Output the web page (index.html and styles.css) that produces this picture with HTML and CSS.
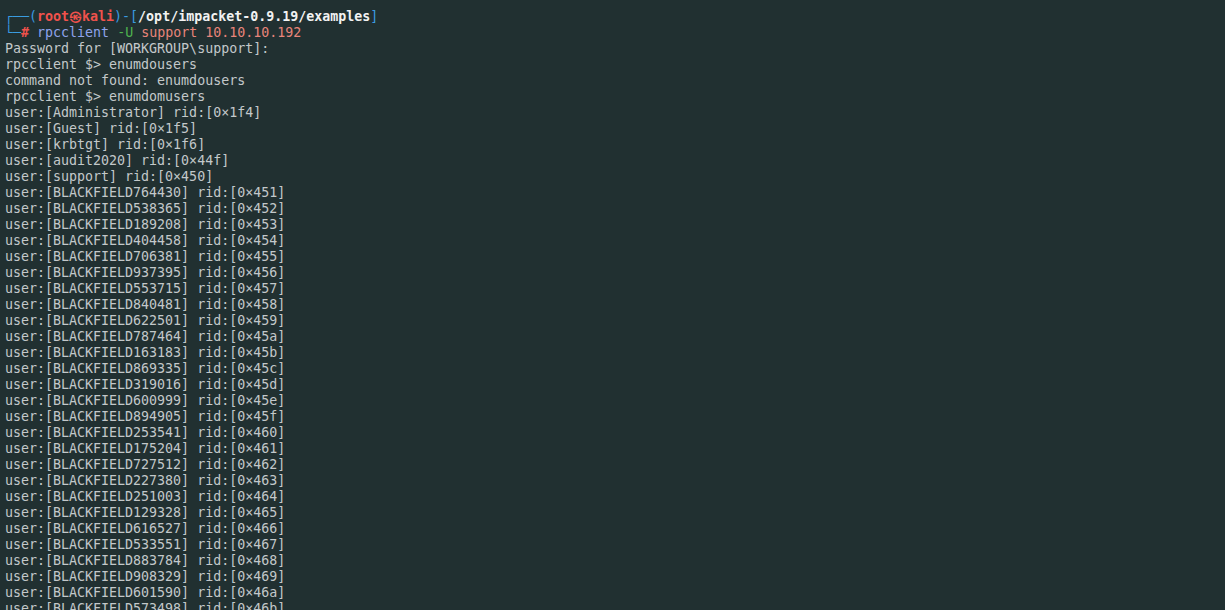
FILE: index.html
```html
<!DOCTYPE html>
<html>
<head>
<meta charset="utf-8">
<link rel="stylesheet" href="styles.css">
</head>
<body>
<div class="term">
<div class="ln"><span class="bx">┌──(</span><span class="usr">root㉿kali</span><span class="bx">)-[</span><span class="path">/opt/impacket-0.9.19/examples</span><span class="bx">]</span></div>
<div class="ln"><span class="bx">└─</span><span class="usr">#</span> <span class="cmd">rpcclient</span> <span class="opt">-U</span> <span class="arg">support 10.10.10.192</span></div>
<div class="ln">Password for [WORKGROUP\support]:</div>
<div class="ln">rpcclient $&gt; enumdousers</div>
<div class="ln">command not found: enumdousers</div>
<div class="ln">rpcclient $&gt; enumdomusers</div>
<div class="ln">user:[Administrator] rid:[0×1f4]</div>
<div class="ln">user:[Guest] rid:[0×1f5]</div>
<div class="ln">user:[krbtgt] rid:[0×1f6]</div>
<div class="ln">user:[audit2020] rid:[0×44f]</div>
<div class="ln">user:[support] rid:[0×450]</div>
<div class="ln">user:[BLACKFIELD764430] rid:[0×451]</div>
<div class="ln">user:[BLACKFIELD538365] rid:[0×452]</div>
<div class="ln">user:[BLACKFIELD189208] rid:[0×453]</div>
<div class="ln">user:[BLACKFIELD404458] rid:[0×454]</div>
<div class="ln">user:[BLACKFIELD706381] rid:[0×455]</div>
<div class="ln">user:[BLACKFIELD937395] rid:[0×456]</div>
<div class="ln">user:[BLACKFIELD553715] rid:[0×457]</div>
<div class="ln">user:[BLACKFIELD840481] rid:[0×458]</div>
<div class="ln">user:[BLACKFIELD622501] rid:[0×459]</div>
<div class="ln">user:[BLACKFIELD787464] rid:[0×45a]</div>
<div class="ln">user:[BLACKFIELD163183] rid:[0×45b]</div>
<div class="ln">user:[BLACKFIELD869335] rid:[0×45c]</div>
<div class="ln">user:[BLACKFIELD319016] rid:[0×45d]</div>
<div class="ln">user:[BLACKFIELD600999] rid:[0×45e]</div>
<div class="ln">user:[BLACKFIELD894905] rid:[0×45f]</div>
<div class="ln">user:[BLACKFIELD253541] rid:[0×460]</div>
<div class="ln">user:[BLACKFIELD175204] rid:[0×461]</div>
<div class="ln">user:[BLACKFIELD727512] rid:[0×462]</div>
<div class="ln">user:[BLACKFIELD227380] rid:[0×463]</div>
<div class="ln">user:[BLACKFIELD251003] rid:[0×464]</div>
<div class="ln">user:[BLACKFIELD129328] rid:[0×465]</div>
<div class="ln">user:[BLACKFIELD616527] rid:[0×466]</div>
<div class="ln">user:[BLACKFIELD533551] rid:[0×467]</div>
<div class="ln">user:[BLACKFIELD883784] rid:[0×468]</div>
<div class="ln">user:[BLACKFIELD908329] rid:[0×469]</div>
<div class="ln">user:[BLACKFIELD601590] rid:[0×46a]</div>
<div class="ln">user:[BLACKFIELD573498] rid:[0×46b]</div>
</div>
</body>
</html>
```
FILE: styles.css
```css
html, body {
  margin: 0;
  padding: 0;
  height: 100%;
  background: #213031;
  overflow: hidden;
}
.term {
  padding: 9px 5px 0 5px;
  font-family: "DejaVu Sans Mono", "Liberation Mono", monospace;
  font-size: 13.3px;
  line-height: 16px;
  color: #c3c8ca;
}
.ln {
  white-space: pre;
  height: 16px;
}
.bx { color: #3a9be0; }
.usr { color: #f0524c; font-weight: bold; }
.path { color: #f2f2f2; font-weight: bold; }
.cmd { color: #8fa3ec; }
.opt { color: #4fb34f; }
.arg { color: #e8857a; }
```
